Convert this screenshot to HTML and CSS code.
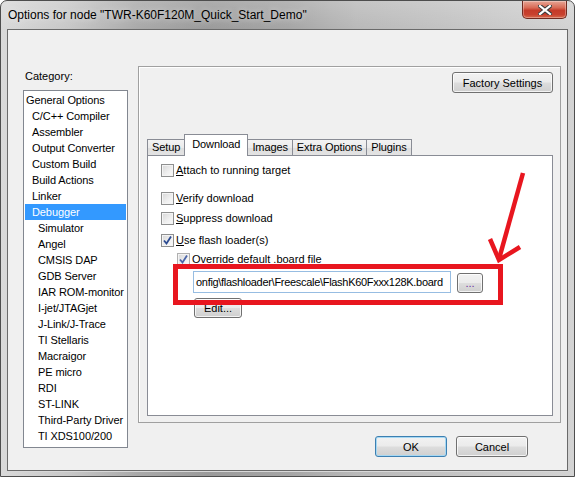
FILE: index.html
```html
<!DOCTYPE html>
<html>
<head>
<meta charset="utf-8">
<link rel="stylesheet" href="styles.css">
</head>
<body>
<div class="window">
  <div class="titlebar">
    <span class="title">Options for node "TWR-K60F120M_Quick_Start_Demo"</span>
    <div class="close">
      <svg width="14" height="10" viewBox="0 0 14 10">
        <path d="M2 1 L12 9 M12 1 L2 9" stroke="#3b3b3b" stroke-width="4.2" stroke-linecap="square"/>
        <path d="M2 1 L12 9 M12 1 L2 9" stroke="#ffffff" stroke-width="2.2" stroke-linecap="square"/>
      </svg>
    </div>
  </div>
  <div class="frame">
    <div class="client">
      <div class="leftcol">
        <div class="cat-label">Category:</div>
        <ul class="tree">
          <li class="l0">General Options</li>
          <li class="l1">C/C++ Compiler</li>
          <li class="l1">Assembler</li>
          <li class="l1">Output Converter</li>
          <li class="l1">Custom Build</li>
          <li class="l1">Build Actions</li>
          <li class="l1">Linker</li>
          <li class="l1 sel">Debugger</li>
          <li class="l2">Simulator</li>
          <li class="l2">Angel</li>
          <li class="l2">CMSIS DAP</li>
          <li class="l2">GDB Server</li>
          <li class="l2">IAR ROM-monitor</li>
          <li class="l2">I-jet/JTAGjet</li>
          <li class="l2">J-Link/J-Trace</li>
          <li class="l2">TI Stellaris</li>
          <li class="l2">Macraigor</li>
          <li class="l2">PE micro</li>
          <li class="l2">RDI</li>
          <li class="l2">ST-LINK</li>
          <li class="l2">Third-Party Driver</li>
          <li class="l2">TI XDS100/200</li>
        </ul>
      </div>
      <div class="rightcol">
        <div class="panel">
          <div class="panel-top">
            <button class="btn factory">Factory Settings</button>
          </div>
          <div class="tabs">
            <div class="tab">Setup</div>
            <div class="tab active">Download</div>
            <div class="tab">Images</div>
            <div class="tab">Extra Options</div>
            <div class="tab">Plugins</div>
          </div>
          <div class="page">
            <div class="chk row-attach"><span class="box"></span><span><u>A</u>ttach to running target</span></div>
            <div class="chk row-verify"><span class="box"></span><span><u>V</u>erify download</span></div>
            <div class="chk row-suppress"><span class="box"></span><span><u>S</u>uppress download</span></div>
            <div class="chk row-flash"><span class="box checked"><svg width="11" height="11" viewBox="0 0 11 11"><path d="M2 5.5 L4.5 8.5 L9 1.5" fill="none" stroke="#2b4a91" stroke-width="1.8"/></svg></span><span><u>U</u>se flash loader(s)</span></div>
            <div class="chk row-override"><span class="box checked dim"><svg width="11" height="11" viewBox="0 0 11 11"><path d="M2 5.5 L4.5 8.5 L9 1.5" fill="none" stroke="#4a64a8" stroke-width="1.8"/></svg></span><span><u>O</u>verride default .board file</span></div>
            <div class="file-row">
              <div class="input">onfig\flashloader\Freescale\FlashK60Fxxx128K.board</div>
              <button class="btn browse">...</button>
            </div>
            <button class="btn edit">Edit...</button>
          </div>
        </div>
        <div class="footer">
          <button class="btn ok">OK</button>
          <button class="btn">Cancel</button>
        </div>
      </div>
    </div>
  </div>
</div>
<svg class="annot" width="575" height="477" viewBox="0 0 575 477">
  <rect x="175.5" y="266.5" width="325" height="36" fill="none" stroke="#e8161f" stroke-width="5"/>
  <path d="M523 173 L499 259" stroke="#e8161f" stroke-width="4.5" fill="none"/>
  <path d="M490 239 L499 260 L520 247" stroke="#e8161f" stroke-width="4.5" fill="none" stroke-linejoin="miter"/>
</svg>
</body>
</html>
```

FILE: styles.css
```css
* { box-sizing: border-box; }

html, body {
  margin: 0;
  padding: 0;
}

body {
  width: 575px;
  height: 477px;
  overflow: hidden;
  position: relative;
  font-family: "Liberation Sans", Arial, sans-serif;
  font-size: 11px;
  color: #000;
  background: #ffffff;
}

.window {
  width: 575px;
  height: 477px;
  border: 1px solid #4d4d4d;
  border-radius: 7px 7px 0 0;
  background:
    linear-gradient(180deg, rgba(255,255,255,0.18) 0px, rgba(255,255,255,0) 28px),
    linear-gradient(90deg, #d9d9d9 0%, #c7c7c7 12%, #a9a9a9 24%, #9b9b9b 36%, #a5a5a5 50%, #b9b9b9 62%, #c3c3c3 78%, #cdcdcd 92%, #d3d3d3 100%);
  display: flex;
  flex-direction: column;
  overflow: hidden;
}

.titlebar {
  height: 28px;
  display: flex;
  align-items: flex-start;
  flex-shrink: 0;
}

.title {
  padding: 7px 0 0 7px;
  font-size: 12px;
  line-height: 15px;
  color: #000;
  text-shadow: 0 0 6px rgba(255,255,255,0.7);
}

.close {
  margin-left: auto;
  margin-right: 7px;
  width: 45px;
  height: 18px;
  border: 1px solid #6f2a20;
  border-top: none;
  border-radius: 0 0 5px 5px;
  background: linear-gradient(180deg, #e7a696 0%, #d86a55 40%, #c43a28 55%, #c8412e 80%, #d66a4c 100%);
  box-shadow: inset 0 0 0 1px rgba(255,255,255,0.3);
  display: flex;
  align-items: center;
  justify-content: center;
}

.frame {
  flex: 1;
  min-height: 0;
  padding: 0 6px 5px 6px;
  display: flex;
}

.client {
  flex: 1;
  border: 1px solid #6a6a6a;
  box-shadow: 0 1px 0 #d8d8d8;
  background: #f0f0f0;
  display: flex;
  align-items: flex-start;
  padding: 36px 0 0 15px;
}

.leftcol {
  width: 105px;
  display: flex;
  flex-direction: column;
}

.cat-label {
  margin-top: 3px;
  padding-left: 2px;
  line-height: 14px;
  height: 14px;
}

.tree {
  list-style: none;
  margin: 7px 0 0 0;
  padding: 1px;
  height: 358px;
  background: #fff;
  border: 1px solid #828790;
  letter-spacing: -0.1px;
}

.tree li {
  height: 16px;
  line-height: 16px;
  white-space: nowrap;
  color: #000;
}

.tree .l0 { padding-left: 1px; }
.tree .l1 { padding-left: 7px; }
.tree .l2 { padding-left: 13px; }

.tree .sel {
  background: #3399ff;
  color: #fff;
}

.rightcol {
  margin-left: 10px;
  width: 423px;
  display: flex;
  flex-direction: column;
}

.panel {
  height: 357px;
  border: 1px solid #a0a0a0;
  box-shadow: inset 1px 1px 0 #ffffff;
  padding: 5px 7px 6px 8px;
  display: flex;
  flex-direction: column;
}

.panel-top {
  display: flex;
  justify-content: flex-end;
}

.btn {
  font-family: "Liberation Sans", Arial, sans-serif;
  font-size: 11px;
  color: #000;
  border: 1px solid #707070;
  border-radius: 3px;
  background: linear-gradient(180deg, #f2f2f2 0%, #ebebeb 48%, #dddddd 52%, #cfcfcf 100%);
  box-shadow: inset 0 0 0 1px rgba(255,255,255,0.75);
  padding: 0;
  margin: 0;
  display: flex;
  align-items: center;
  justify-content: center;
}

.factory {
  width: 101px;
  height: 21px;
}

.tabs {
  margin-top: 41px;
  height: 21px;
  display: flex;
  align-items: flex-end;
  position: relative;
  z-index: 1;
}

.tab {
  height: 16px;
  line-height: 15px;
  padding: 0 4px;
  border: 1px solid #898c95;
  border-bottom: none;
  border-right: none;
  background: linear-gradient(180deg, #f3f3f3 0%, #ebebeb 50%, #dedede 51%, #e3e3e3 100%);
  letter-spacing: -0.1px;
}

.tab:last-child { border-right: 1px solid #898c95; }

.tab.active {
  height: 22px;
  margin-bottom: -1px;
  line-height: 19px;
  padding: 0 7px;
  background: #fff;
  border-right: 1px solid #898c95;
}

.tab.active + .tab { border-left: none; }

.page {
  flex: 1;
  background: #fff;
  border: 1px solid #898c95;
  padding: 8px 0 0 13px;
  display: flex;
  flex-direction: column;
  align-items: flex-start;
}

.chk {
  display: flex;
  align-items: center;
  gap: 2px;
  height: 13px;
  line-height: 13px;
  white-space: nowrap;
}

.box {
  width: 13px;
  height: 13px;
  border: 1px solid #8e8f8f;
  background: linear-gradient(135deg, #d6d6d6 0%, #f0f0f0 60%, #fafafa 100%);
  box-shadow: inset 0 0 0 1px #f4f4f4;
  display: flex;
  align-items: center;
  justify-content: center;
}

.box.dim {
  border-color: #b0b0b0;
}

.row-verify { margin-top: 15px; }
.row-suppress { margin-top: 7px; }
.row-flash { margin-top: 9px; }
.row-override { margin-top: 6px; margin-left: 16px; }

.file-row {
  margin-top: 5px;
  margin-left: 32px;
  display: flex;
  align-items: flex-end;
  gap: 6px;
}

.input {
  width: 258px;
  height: 22px;
  line-height: 20px;
  border: 1px solid #97bde2;
  background: #fff;
  padding: 0 2px;
  overflow: hidden;
  white-space: nowrap;
  letter-spacing: -0.3px;
}

.browse {
  width: 26px;
  height: 20px;
  color: #6a2fa0;
}

.edit {
  margin-top: 5px;
  margin-left: 33px;
  width: 48px;
  height: 20px;
}

.footer {
  margin-top: 13px;
  padding-right: 33px;
  display: flex;
  justify-content: flex-end;
  gap: 9px;
}

.footer .btn {
  width: 72px;
  height: 21px;
}

.footer .ok {
  border-color: #3c7fb1;
  box-shadow: inset 0 0 0 1px #a6d8f3;
}

.annot {
  position: absolute;
  top: 0;
  left: 0;
  pointer-events: none;
}
```
